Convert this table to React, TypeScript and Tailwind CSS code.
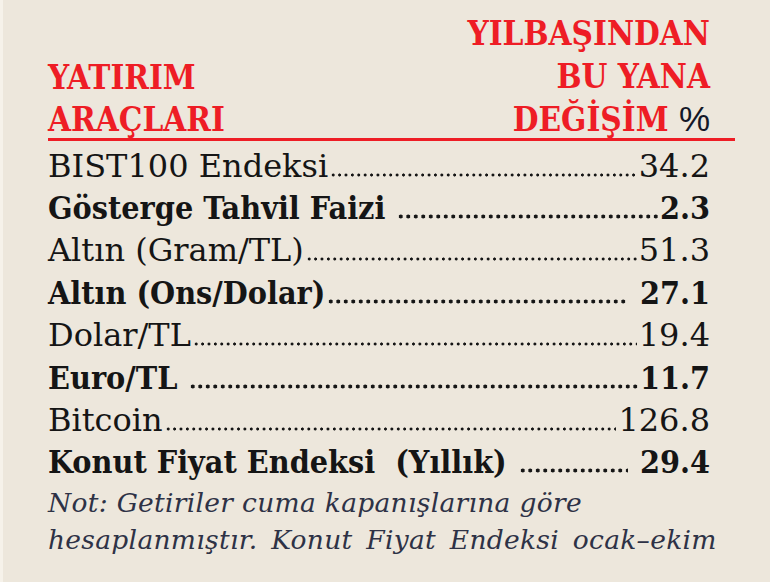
const rows = [
  { label: 'BIST100 Endeksi', value: '34.2', bold: false },
  { label: 'Gösterge Tahvil Faizi ', value: '2.3', bold: true },
  { label: 'Altın (Gram/TL)', value: '51.3', bold: false },
  { label: 'Altın (Ons/Dolar)', value: ' 27.1', bold: true },
  { label: 'Dolar/TL', value: '19.4', bold: false },
  { label: 'Euro/TL ', value: '11.7', bold: true },
  { label: 'Bitcoin', value: '126.8', bold: false },
  { label: 'Konut Fiyat Endeksi\u00a0\u00a0(Yıllık) ', value: ' 29.4', bold: true }
];

export default function App() {
  return (
    <div className="h-[582px] w-[770px] overflow-hidden border-l-[3px] border-[#f6f2ea] bg-[#ede7dc] pl-[45px] pr-[35px] font-['DejaVu_Serif',serif]">
      <div className="flex items-end justify-between pr-[25px] pt-[13px] font-['DejaVu_Serif_Condensed','DejaVu_Serif',serif] text-[33px] font-bold leading-[42.5px] text-[#ee1d25]">
        <div>
          <div>YATIRIM</div>
          <div>ARAÇLARI</div>
        </div>
        <div className="text-right">
          <div>YILBAŞINDAN</div>
          <div>BU YANA</div>
          <div>
            DEĞİŞİM <span className="font-['Liberation_Sans',sans-serif] text-[35px] font-normal text-[#141828]">%</span>
          </div>
        </div>
      </div>
      <div className="-mt-[4px] h-[3px] bg-[#ee1d25]" />

      <div className="mt-[4px] pr-[25px] text-[32px] leading-[42.4px] text-[#151515]">
        {rows.map((row) => (
          <div
            key={row.label}
            className={
              row.bold
                ? "flex whitespace-pre font-['DejaVu_Serif_Condensed','DejaVu_Serif',serif] font-bold"
                : 'flex whitespace-pre'
            }
          >
            <span>{row.label}</span>
            {row.bold ? (
              <span className="mx-[2px] flex-1 bg-[radial-gradient(circle,#151515_1.7px,transparent_2.3px)] bg-[length:7.5px_7px] bg-[position:0_26px] bg-repeat-x" />
            ) : (
              <span className="mx-[2px] flex-1 bg-[radial-gradient(circle,#151515_1.3px,transparent_1.8px)] bg-[length:6.4px_6px] bg-[position:0_27px] bg-repeat-x" />
            )}
            <span>{row.value}</span>
          </div>
        ))}
      </div>

      <div className="text-[26.5px] italic leading-[37px] tracking-[0.3px] text-[#2e3246]">
        <div>Not: Getiriler cuma kapanışlarına göre</div>
        <div className="[word-spacing:5px]">hesaplanmıştır. Konut Fiyat Endeksi ocak–ekim</div>
      </div>
    </div>
  );
}
